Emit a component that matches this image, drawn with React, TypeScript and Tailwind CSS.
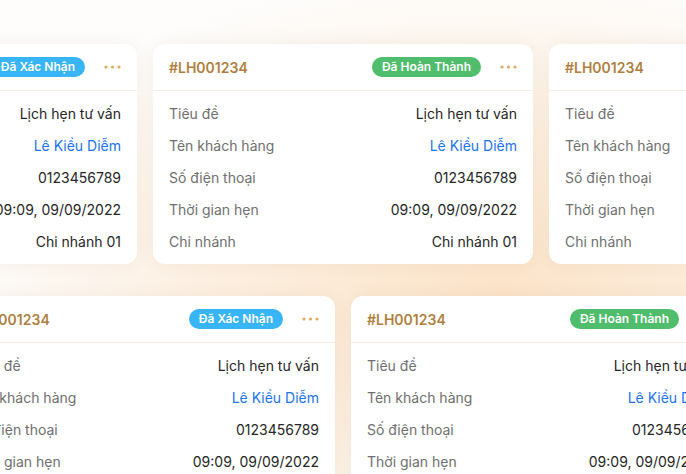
type Status = "confirmed" | "done";

const rows = [
  { label: "Tiêu đề", value: "Lịch hẹn tư vấn" },
  { label: "Tên khách hàng", value: "Lê Kiều Diễm", link: true },
  { label: "Số điện thoại", value: "0123456789" },
  { label: "Thời gian hẹn", value: "09:09, 09/09/2022" },
  { label: "Chi nhánh", value: "Chi nhánh 01" },
];

const Dots = () => (
  <svg width="17" height="4" viewBox="0 0 17 4" className="shrink-0">
    <circle cx="2" cy="2" r="1.6" fill="#dfac62" />
    <circle cx="8.5" cy="2" r="1.6" fill="#dfac62" />
    <circle cx="15" cy="2" r="1.6" fill="#dfac62" />
  </svg>
);

const AppointmentCard = ({ status }: { status: Status }) => (
  <div className="w-[380px] shrink-0 rounded-xl bg-white shadow-[0_0_18px_rgba(120,90,60,0.07)]">
    <div className="flex h-[47px] items-center justify-between border-b border-[#f6ede4] px-4">
      <span className="text-[14px] font-semibold text-[#b07f40]">#LH001234</span>
      <div className="flex items-center gap-[19px]">
        {status === "done" ? (
          <span className="flex h-5 items-center rounded-full bg-[#4fbd6c] px-[10px] text-[12px] font-semibold text-white">
            Đã Hoàn Thành
          </span>
        ) : (
          <span className="flex h-5 items-center rounded-full bg-[#37b5f6] px-[10px] text-[12px] font-semibold text-white">
            Đã Xác Nhận
          </span>
        )}
        <Dots />
      </div>
    </div>
    <div className="px-4 pb-[7px] pt-[6px]">
      {rows.map((r) => (
        <div key={r.label} className="flex h-8 items-center justify-between text-[14px]">
          <span className="text-[#6f6f6f]">{r.label}</span>
          <span className={r.link ? "text-[#1b74f0]" : "text-[#262626]"}>{r.value}</span>
        </div>
      ))}
    </div>
  </div>
);

export default function App() {
  return (
    <div
      className="relative h-[474px] w-[686px] overflow-hidden bg-[#fefdfc] bg-[radial-gradient(ellipse_560px_320px_at_500px_290px,#fce4c9_0%,#fdefe0_50%,#fefdfc_100%)] antialiased"
      style={{ fontFamily: "Inter, 'Noto Sans', sans-serif" }}
    >
      <div className="ml-[-243px] flex gap-4 pt-[44px]">
        <AppointmentCard status="confirmed" />
        <AppointmentCard status="done" />
        <AppointmentCard status="done" />
      </div>
      <div className="ml-[-45px] mt-8 flex gap-4">
        <AppointmentCard status="confirmed" />
        <AppointmentCard status="done" />
      </div>
    </div>
  );
}
